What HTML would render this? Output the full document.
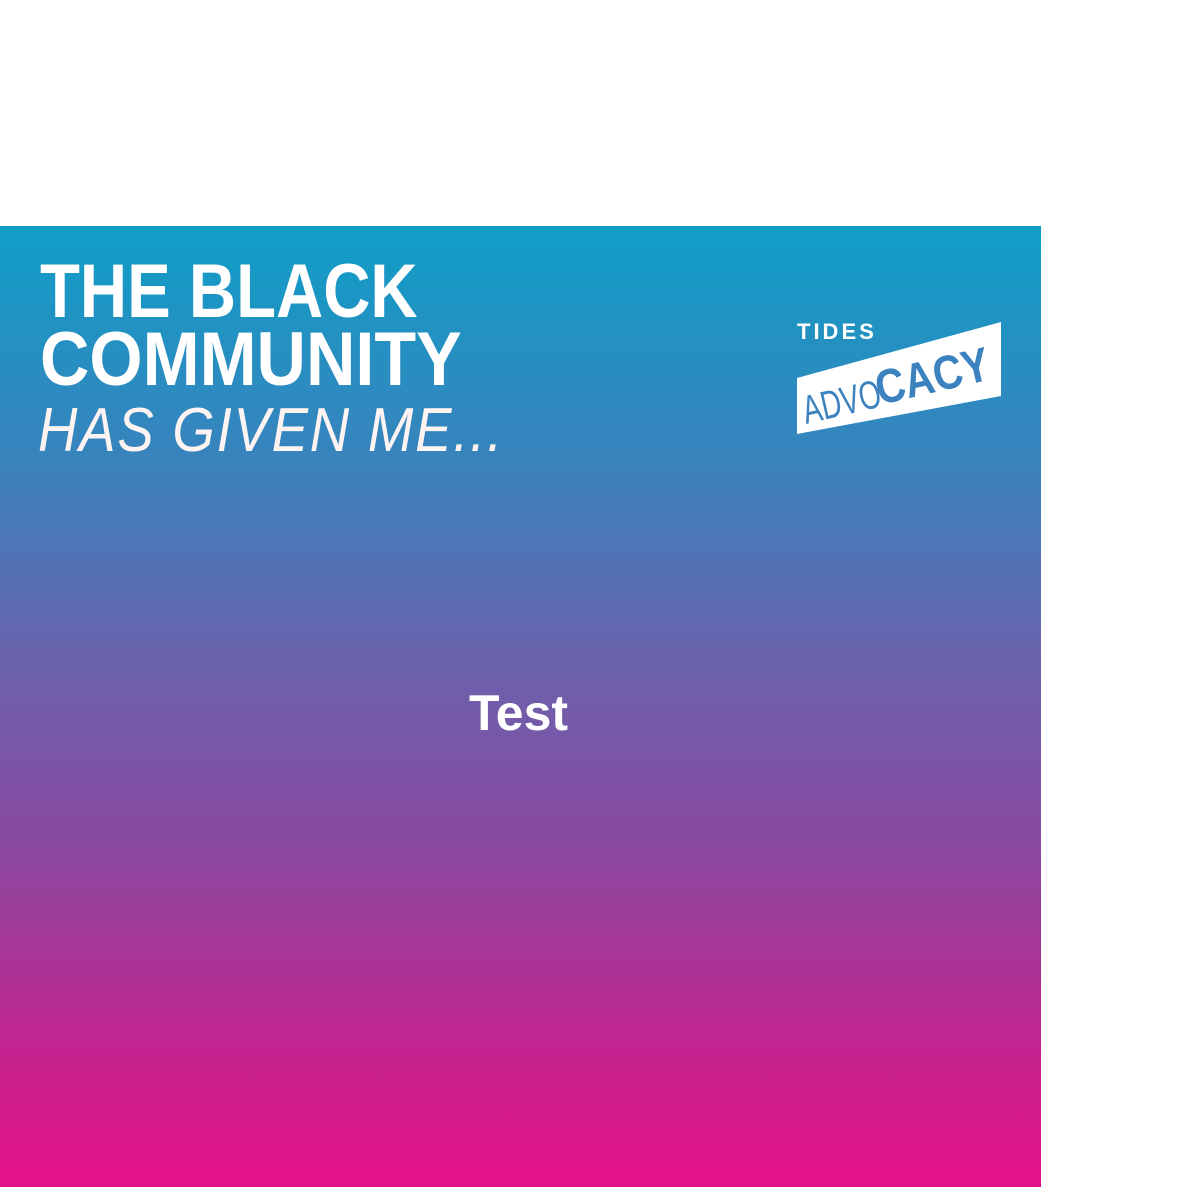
<!DOCTYPE html>
<html><head><style>
body{margin:0;width:1200px;height:1200px;background:#fff;position:relative;overflow:hidden;font-family:"Liberation Sans",sans-serif}
.box{position:absolute;left:0;top:226px;width:1041px;height:961px;background:linear-gradient(180deg,#0f9ec7 0%,#3a82bc 25%,#6a63ad 45%,#8a48a0 65%,#c2258f 85%,#e5108a 100%)}
.h{position:absolute;left:40px;color:#fff;font-weight:bold;font-size:76px;line-height:1;white-space:nowrap;transform-origin:0 0}
.i{position:absolute;left:38px;top:400px;color:#fff4f2;font-style:italic;font-size:62px;line-height:1;white-space:nowrap;transform-origin:0 0;letter-spacing:2px}
</style></head><body>
<div class="box"></div>
<div class="h" style="top:254px;transform:scaleX(0.86)">THE BLACK</div>
<div class="h" style="top:322px;transform:scaleX(0.90)">COMMUNITY</div>
<div class="i" style="transform:scaleX(0.88)">HAS GIVEN ME...</div>
<div style="position:absolute;left:0;width:1041px;top:688px;text-align:center;color:#fff;font-weight:bold;font-size:50px;line-height:1"><span style="position:relative;left:-2px">Test</span></div>
<svg style="position:absolute;left:0;top:0" width="1200" height="1200">
<text x="797" y="339" fill="#fff" font-family="Liberation Sans" font-weight="bold" font-size="22" letter-spacing="3">TIDES</text>
<polygon points="797,378 1001,322 1001,396 797,434" fill="#fff"/>
<g transform="translate(806,424) rotate(-13)">
<text x="0" y="0" fill="#3b82bf" font-family="Liberation Sans" font-size="40" transform="scale(0.7,1)">ADVO</text>
<text x="0" y="-2" fill="#3b82bf" font-family="Liberation Sans" font-weight="bold" font-size="48" transform="translate(76,0) scale(0.85,1)">CACY</text>
</g>
</svg>
</body></html>
